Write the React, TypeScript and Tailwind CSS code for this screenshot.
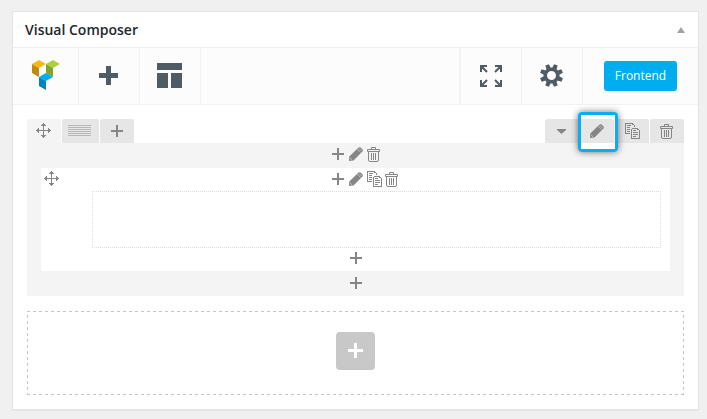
import React from "react";

type P = { className?: string };

const Plus = ({ className = "" }: P) => (
  <svg className={className} width="12" height="12" viewBox="0 0 12 12" shapeRendering="crispEdges">
    <path d="M5 0h2v5h5v2H7v5H5V7H0V5h5z" fill="#868686" />
  </svg>
);

const Move = ({ className = "" }: P) => (
  <svg className={className} width="15" height="15" viewBox="0 0 15 15" fill="#868686" shapeRendering="crispEdges">
    <path d="M7 0h1v1h1v1h1v1H8v4h4V5h1v1h1v1h1v1h-1v1h-1v1h-1V8H8v4h2v1H9v1H8v1H7v-1H6v-1H5v-1h2V8H3v2H2V9H1V8H0V7h1V6h1V5h1v2h4V3H5V2h1V1h1z" />
  </svg>
);

const Pencil = ({ className = "" }: P) => (
  <svg className={className} width="14" height="14" viewBox="0 0 14 14">
    <path d="M0 14l.3-4.500L9.500.6Q10.700-.3 11.700.6l1.800 1.800q.8 1 0 2L4.500 13.500z" fill="#868686" />
    <path d="M8.300 2.300l3.500 3.500M9.700 1l3.400 3.400" stroke="#e6e6e6" strokeWidth=".8" strokeDasharray="1 .5" />
    <path d="M1.200 11l1.800 1.800" stroke="#dedede" strokeWidth=".7" />
  </svg>
);

const Copy = ({ className = "" }: P) => (
  <svg className={className} width="15" height="16" viewBox="0 0 15 16" fill="none" stroke="#868686" shapeRendering="crispEdges">
    <path d="M5 10.500H.5V.5h7M7 1.500h2M9.500 2v2M2 2.500h4M2 4.500h3M2 6.500h3M2 8.500h3M6.500 5.500h6M12 6.500h2M14.500 7v8.500h-8v-10M8 7.500h3M8 9.500h5M8 11.500h5M8 13.500h3" />
  </svg>
);

const Trash = ({ className = "" }: P) => (
  <svg className={className} width="13" height="15" viewBox="0 0 13 15" fill="none" stroke="#868686">
    <path d="M4.500 2V.5h4V2M.5 4.500v-2h12v2zM1.500 5v8q0 1.500 1.500 1.500h7q1.500 0 1.500-1.500V5M4.500 6v7M6.500 6v7M8.500 6v7" />
  </svg>
);

const Logo = () => (
  <svg width="28" height="30" viewBox="0 0 28 30">
    <path d="M0 4l7-4 7 4-7 4z" fill="#fcb712" />
    <path d="M0 4l7 4v9l-7-4z" fill="#c08a0f" />
    <path d="M14 4l7-4 7 4-7 4z" fill="#acd23b" />
    <path d="M14 4l7 4v9l-7-4z" fill="#84a32b" />
    <path d="M7 17l7-4 7 4-7 4z" fill="#00aeef" />
    <path d="M7 17l7 4v9l-7-4z" fill="#0284b4" />
  </svg>
);

const Gear = () => (
  <svg width="23" height="23" viewBox="-11.500 -11.500 23 23" fill="#4f5b65">
    <circle r="6.300" fill="none" stroke="#4f5b65" strokeWidth="3.600" />
    {[22.5, 67.5, 112.5, 157.5, 202.5, 247.5, 292.5, 337.5].map((a) => (
      <path key={a} d="M-2.300-7.500l.4-4h3.800l.4 4z" transform={`rotate(${a})`} />
    ))}
  </svg>
);

const Expand = () => (
  <svg width="22" height="22" viewBox="0 0 22 22" fill="none" stroke="#4f5b65" strokeWidth="2">
    <path d="M1 7V1h6M1 1l6 6M15 1h6v6M21 1l-6 6M1 15v6h6M1 21l6-6M21 15v6h-6M21 21l-6-6" />
  </svg>
);

export default function App() {
  return (
    <div className="h-[419px] w-[707px] bg-[#f0f0f0] pl-3 pt-[11px] font-['Open_Sans',sans-serif]">
      <section className="h-[399px] w-[687px] border border-[#e4e4e4] bg-white shadow-[0_1px_1px_rgba(0,0,0,0.04)]">
        <header className="flex h-9 items-center justify-between border-b border-[#eeeeee] pl-3 pr-[13px]">
          <h1 className="text-[14px] font-semibold leading-5 text-[#23282d]">Visual Composer</h1>
          <svg width="8" height="6" viewBox="0 0 8 6"><path d="M4 0l4 6H0z" fill="#9fa5aa" /></svg>
        </header>
        <nav className="flex h-[57px] border-b border-[#f2f2f2] bg-[#fcfcfc]">
          <div className="flex w-[66px] border-r border-[#f2f2f2] pl-[19px] pt-3"><Logo /></div>
          <div className="flex w-[61px] border-r border-[#f2f2f2] pl-5 pt-[18px]">
            <svg width="19" height="19" viewBox="0 0 19 19" shapeRendering="crispEdges"><path d="M7 0h5v7h7v5h-7v7H7v-7H0V7h7z" fill="#4f5b65" /></svg>
          </div>
          <div className="flex w-[61px] border-r border-[#f2f2f2] pl-[17px] pt-[15px]">
            <svg width="25" height="25" viewBox="0 0 25 25" shapeRendering="crispEdges"><path d="M0 0h25v7H0zM0 10h11v15H0zM14 10h11v15H14z" fill="#4f5b65" /></svg>
          </div>
          <div className="ml-auto flex w-[63px] border-l-2 border-r border-[#f2f2f2] pl-[19px] pt-[17px]"><Expand /></div>
          <div className="flex w-[61px] border-r border-[#f2f2f2] pl-[18px] pt-4"><Gear /></div>
          <div className="w-[115px] pl-[21px] pt-[13px]">
            <button className="block h-[30px] w-[73px] rounded-[3px] bg-[#00aef0] text-[12px] leading-[28px] text-white">Frontend</button>
          </div>
        </nav>
        <main className="px-[14px] pt-[14px]">
          <div className="flex h-6 gap-px">
            <div className="w-[34px] rounded-t-[2px] bg-[#f4f4f4] pl-[9px] pt-1"><Move /></div>
            <div className="w-[37px] rounded-t-[2px] bg-[#e6e6e6] pl-[6px] pt-[6px]">
              <svg width="23" height="11" viewBox="0 0 23 11" stroke="#b8b8b8" shapeRendering="crispEdges"><path d="M0 .5h23M0 2.500h23M0 4.500h23M0 6.500h23M0 8.500h23M0 10.500h23" /></svg>
            </div>
            <div className="w-[34px] rounded-t-[2px] bg-[#e6e6e6] pl-[11px] pt-[6px]"><Plus /></div>
            <div className="ml-auto w-[34px] rounded-tl-[2px] bg-[#e6e6e6] pl-3 pt-[10px]">
              <svg width="9" height="5" viewBox="0 0 9 5"><path d="M0 0h9v1L4.500 5 0 1z" fill="#868686" /></svg>
            </div>
            <div className="relative z-10 w-[34px] rounded-t-[2px] bg-[#e6e6e6] pl-[10px] pt-[5px]">
              <Pencil />
              <div className="absolute -left-[2px] -top-[7px] h-10 w-10 rounded-[4px] border-[3px] border-[#0aaef0] shadow-[0_0_7px_rgba(0,0,0,0.55)]">
                <div className="h-1 bg-white" />
                <div className="mt-6 h-[6px] bg-white" />
              </div>
            </div>
            <div className="w-[34px] rounded-t-[2px] bg-[#e6e6e6] pl-[10px] pt-1"><Copy /></div>
            <div className="w-[34px] rounded-t-[2px] bg-[#e6e6e6] pl-[10px] pt-[5px]"><Trash /></div>
          </div>
          <div className="h-[153px] bg-[#f4f4f4] px-[14px]">
            <div className="flex h-[25px] pl-[291px] pt-1">
              <Plus className="mt-[1px]" /><Pencil className="ml-[5px]" /><Trash className="ml-1" />
            </div>
            <div className="h-[103px] bg-white">
              <div className="flex h-[23px] pt-[3px]">
                <Move className="ml-[3px]" />
                <Plus className="ml-[273px] mt-[2px]" /><Pencil className="ml-[5px] mt-px" /><Copy className="ml-1" /><Trash className="ml-[3px] mt-px" />
              </div>
              <div className="ml-[51px] h-[57px] w-[569px] border border-dotted border-[#dddddd]" />
              <Plus className="ml-[309px] mt-1" />
            </div>
            <Plus className="ml-[309px] mt-[6px]" />
          </div>
          <div className="relative mt-[15px] flex h-[84px] justify-center pt-[21px]">
            <svg className="absolute inset-0" width="657" height="84" viewBox="0 0 657 84" fill="none" stroke="#c6c6c6" strokeDasharray="3 3" shapeRendering="crispEdges">
              <path d="M0 .5h657M0 83.500h657M.5 4v80M656.500 4v80" />
            </svg>
            <button className="relative flex h-[38px] w-[39px] justify-center rounded-[4px] bg-[#c8c8c8] pt-[11px]">
              <svg width="15" height="15" viewBox="0 0 15 15" shapeRendering="crispEdges"><path d="M6 0h3v6h6v3H9v6H6V9H0V6h6z" fill="#fff" /></svg>
            </button>
          </div>
        </main>
      </section>
    </div>
  );
}
